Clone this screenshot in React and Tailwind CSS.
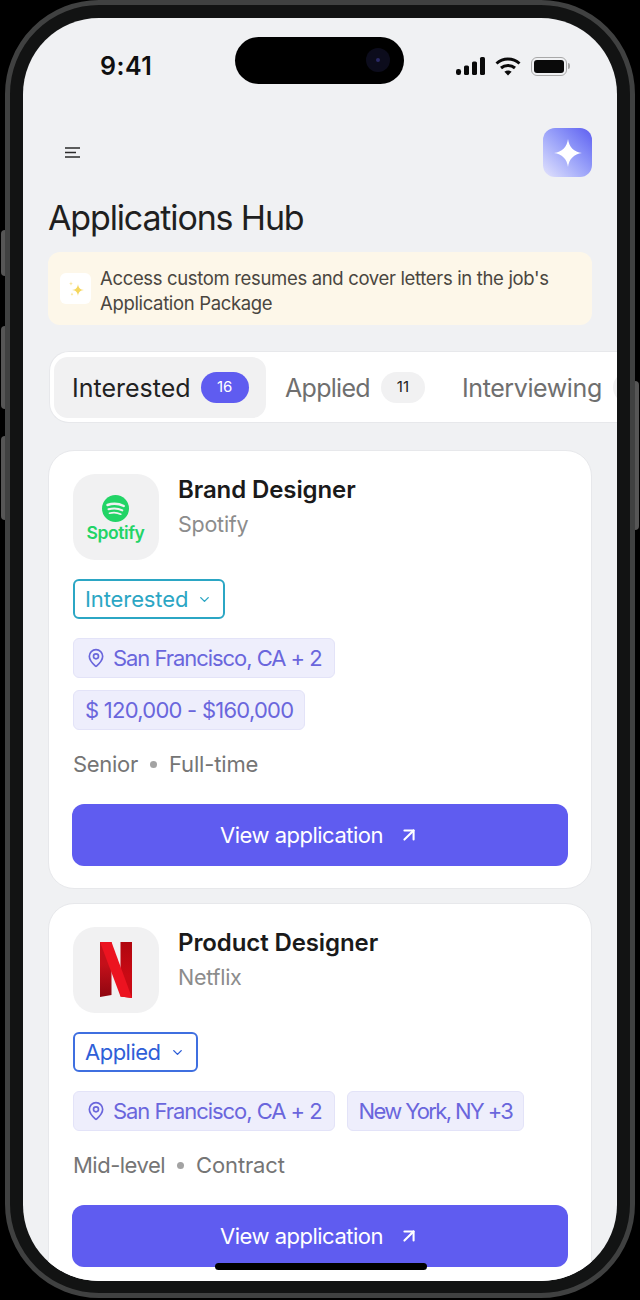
import { ArrowUpRight, ChevronDown, MapPin } from "lucide-react";

const font = { fontFamily: '"Inter", "Noto Sans", sans-serif' };

function StatusIcons() {
  return (
    <div className="flex items-center gap-[10px]">
      {/* signal */}
      <svg width="29" height="19" viewBox="0 0 29 19" fill="#0a0a0a">
        <rect x="0" y="12" width="5" height="6" rx="2.2" />
        <rect x="8" y="8.5" width="5" height="9.5" rx="1.6" />
        <rect x="16" y="4.5" width="5" height="13.5" rx="1.6" />
        <rect x="24" y="0" width="5" height="18" rx="1.6" />
      </svg>
      {/* wifi */}
      <svg width="26" height="19" viewBox="0 0 26 19" fill="none" stroke="#0a0a0a" strokeWidth="3">
        <path d="M1.5 6.5C8 0.6 18 0.6 24.5 6.5" />
        <path d="M6 11C10 7.6 16 7.6 20 11" />
        <path d="M13 18.6L9.4 14.8C11.4 13.2 14.6 13.2 16.6 14.8Z" fill="#0a0a0a" stroke="none" />
      </svg>
      {/* battery */}
      <div className="flex items-center gap-[1px]">
        <div className="w-[36px] h-[19px] rounded-[6px] border-[1.5px] border-[#a8a8a8] p-[2px]">
          <div className="w-full h-full rounded-[3px] bg-[#0a0a0a]" />
        </div>
        <div className="w-[2px] h-[6px] rounded-r-sm bg-[#a8a8a8]" />
      </div>
    </div>
  );
}

function SpotifyLogo() {
  return (
    <div className="mt-[2px] -ml-[1px] flex flex-col items-center gap-[1px]">
      <svg width="27" height="27" viewBox="0 0 27 27" fill="none">
        <circle cx="13.5" cy="13.5" r="13.5" fill="#22d466" />
        <path d="M5.5 10C10.5 8.2 17 8.6 21.8 11" stroke="#f1f1f2" strokeWidth="2.4" strokeLinecap="round" />
        <path d="M6.5 14.3C11 13 16.5 13.4 20.3 15.4" stroke="#f1f1f2" strokeWidth="2" strokeLinecap="round" />
        <path d="M7.5 18.2C11.2 17.2 15.6 17.6 18.8 19.2" stroke="#f1f1f2" strokeWidth="1.7" strokeLinecap="round" />
      </svg>
      <span className="text-[17.5px] leading-[19px] font-semibold tracking-[-0.4px] text-[#22d466]">Spotify</span>
    </div>
  );
}

function NetflixLogo() {
  return (
    <svg width="32" height="56" viewBox="0 0 32 56">
      <defs>
        <linearGradient id="nfLeft" x1="0" y1="0" x2="0" y2="1">
          <stop offset="0.4" stopColor="#c4101a" />
          <stop offset="1" stopColor="#8f0610" />
        </linearGradient>
        <linearGradient id="nfRight" x1="0" y1="0" x2="0" y2="1">
          <stop offset="0" stopColor="#b0060f" />
          <stop offset="0.6" stopColor="#c90a14" />
        </linearGradient>
      </defs>
      <path d="M0 0H11.5V53L0 55Z" fill="url(#nfLeft)" />
      <path d="M20.5 0H32V56L20.5 54.500Z" fill="url(#nfRight)" />
      <path d="M0 0H11.5L32 56L20.5 54.500Z" fill="#ec1320" />
    </svg>
  );
}

function Tag({ children, icon, tracking }) {
  return (
    <div className={`flex items-center gap-[7px] h-[40px] rounded-[6px] bg-[#eeeefc] border border-[#e3e3f8] text-[22px] text-[#6a66dc] ${icon ? "pl-[12px] pr-[12px]" : "px-[11px]"} ${tracking}`}>
      {icon && <MapPin size={20} strokeWidth={2} className="text-[#6a66dc]" />}
      <span>{children}</span>
    </div>
  );
}

function JobCard({ title, company, logo, status, statusClass, tagRows, level, levelClass, type }) {
  return (
    <div className="bg-white border border-[#e7e8eb] rounded-[26px] pl-[24px] pr-[23px] pt-[23px] pb-[22px] flex flex-col">
      <div className="flex gap-[19px]">
        <div className="w-[86px] h-[86px] rounded-[22px] bg-[#f1f1f2] flex items-center justify-center">
          {logo}
        </div>
        <div>
          <div className="text-[24px] leading-[32px] font-semibold tracking-[-0.1px] text-[#1a1a1a]">{title}</div>
          <div className="mt-[2px] text-[21.5px] leading-[32px] tracking-[-0.25px] text-[#8c8c8c]">{company}</div>
        </div>
      </div>

      <div className={`mt-[19px] self-start flex items-center gap-[9px] h-[40px] pl-[10px] pr-[11px] rounded-[6px] border-2 bg-white text-[22px] ${statusClass}`}>
        {status}
        <ChevronDown size={15} strokeWidth={2.25} />
      </div>

      <div className="mt-[19px] flex flex-col gap-[12px]">
        {tagRows.map((row, i) => (
          <div key={i} className="flex gap-[12px]">
            {row.map((t) => (
              <Tag key={t.label} icon={t.icon} tracking={t.tracking}>{t.label}</Tag>
            ))}
          </div>
        ))}
      </div>

      <div className="mt-[20px] flex items-center gap-[12px] h-[28px] text-[22px] text-[#757575]">
        <span className={levelClass}>{level}</span>
        <span className="w-[7px] h-[7px] rounded-full bg-[#a3a3a3]" />
        <span className="tracking-[-0.15px]">{type}</span>
      </div>

      <button className="mt-[26px] -ml-px h-[62px] rounded-[12px] bg-[#5f5cf0] text-white text-[22px] tracking-[-0.5px] flex items-center justify-center gap-[15px]">
        View application
        <ArrowUpRight size={22} strokeWidth={2.25} />
      </button>
    </div>
  );
}

export default function App() {
  return (
    <div style={font} className="relative w-[640px] h-[1300px] bg-black px-[5px] overflow-hidden">
      {/* side buttons */}
      <div className="absolute left-[1px] top-[230px] w-[4px] h-[46px] rounded-l-sm bg-[#565656]" />
      <div className="absolute left-[1px] top-[326px] w-[4px] h-[83px] rounded-l-sm bg-[#565656]" />
      <div className="absolute left-[1px] top-[436px] w-[4px] h-[84px] rounded-l-sm bg-[#565656]" />
      <div className="absolute right-[1px] top-[381px] w-[4px] h-[149px] rounded-r-sm bg-[#565656]" />

      {/* phone body */}
      <div className="relative h-[1298px] rounded-[94px] border-[5px] border-[#404141] bg-[#121313] px-[13px] pt-[13px] pb-[12px]">
        <div className="relative h-full rounded-[76px] bg-[#f0f1f3] overflow-hidden">
          {/* status bar */}
          <div className="flex pt-[19px] pl-[77px]">
            <div className="w-[135px] h-[47px] pt-[12px] flex items-center text-[25px] font-semibold tracking-[0.5px] text-[#0f0f0f]">9:41</div>
            <div className="relative w-[169px] h-[47px] rounded-full bg-black">
              <div className="absolute left-[131px] top-[11px] w-[24px] h-[24px] rounded-full bg-[#0c0c1c]">
                <div className="absolute left-[10px] top-[10px] w-[4px] h-[4px] rounded-full bg-[#2b2a66]" />
              </div>
            </div>
            <div className="ml-[52px] h-[47px] flex items-center pt-[11px]">
              <StatusIcons />
            </div>
          </div>

          <div className="pl-[25px] pr-[25px]">
            {/* top actions */}
            <div className="mt-[44px] flex items-center justify-between">
              <svg className="ml-[17px]" width="16" height="11" viewBox="0 0 16 11" fill="none" stroke="#2a2a2a" strokeWidth="1.6">
                <path d="M0 1H15" />
                <path d="M0 5.5H11" />
                <path d="M0 10H15" />
              </svg>
              <div className="w-[49px] h-[49px] rounded-[12px] bg-gradient-to-bl from-[#5f5cf0] to-[#e4e3fb] flex items-center justify-center">
                <svg width="28" height="28" viewBox="0 0 28 28" fill="white">
                  <path d="M14 0C15 8 20 13 28 14C20 15 15 20 14 28C13 20 8 15 0 14C8 13 13 8 14 0Z" />
                </svg>
              </div>
            </div>

            {/* title */}
            <h1 className="mt-[19px] text-[34px] leading-[44px] tracking-[-1.15px] text-[#1f1f1f]">Applications Hub</h1>

            {/* info banner */}
            <div className="mt-[12px] h-[73px] rounded-[12px] bg-[#fdf7e9] flex items-center gap-[9px] pl-[12px]">
              <div className="w-[31px] h-[31px] rounded-[6px] bg-white flex items-center justify-center">
                <svg width="20" height="20" viewBox="0 0 20 20" fill="#f5d75e">
                  <path d="M12 5C12.500 9 14 10.500 18 11C14 11.500 12.500 13 12 17C11.500 13 10 11.500 6 11C10 10.500 11.500 9 12 5Z" />
                  <path d="M5 2C5.200 4 5.700 4.500 7 4.800C5.700 5 5.200 5.500 5 7C4.800 5.500 4.300 5 3 4.800C4.300 4.500 4.800 4 5 2Z" fill="#f8e49a" />
                  <path d="M6 13C6.100 14.500 6.500 15 7.500 15.200C6.500 15.400 6.100 16 6 17.500C5.900 16 5.500 15.400 4.500 15.200C5.500 15 5.900 14.500 6 13Z" fill="#f8e49a" />
                </svg>
              </div>
              <p className="pt-[4px] text-[18.500px] leading-[25px] tracking-[-0.34px] text-[#4a4640]">
                Access custom resumes and cover letters in the job's
                <br />
                Application Package
              </p>
            </div>

            {/* tabs */}
            <div className="mt-[26px] ml-px -mr-[25px] h-[72px] rounded-l-[20px] bg-white border border-[#e7e8eb] border-r-0 flex items-center pl-[4px] overflow-hidden">
              <div className="shrink-0 w-[212px] h-[61px] rounded-[14px] bg-[#f1f1f2] flex items-center gap-[10px] pl-[18px]">
                <span className="pt-[3px] text-[25px] tracking-[0px] text-[#222222]">Interested</span>
                <span className="w-[48px] h-[31px] rounded-full bg-[#5f5cf0] text-white text-[15px] flex items-center justify-center">16</span>
              </div>
              <div className="shrink-0 ml-[19px] flex items-center gap-[11px]">
                <span className="pt-[3px] text-[25px] tracking-[-0.7px] text-[#6f6f6f]">Applied</span>
                <span className="w-[44px] h-[31px] rounded-full bg-[#f1f1f2] text-[#222222] text-[15px] flex items-center justify-center">11</span>
              </div>
              <div className="shrink-0 ml-[37px] flex items-center gap-[11px]">
                <span className="pt-[3px] text-[25px] tracking-[-0.4px] text-[#6f6f6f]">Interviewing</span>
                <span className="w-[44px] h-[31px] rounded-full bg-[#f1f1f2]" />
              </div>
            </div>

            {/* cards */}
            <div className="mt-[27px] flex flex-col gap-[14px]">
              <JobCard
                title="Brand Designer"
                company="Spotify"
                logo={<SpotifyLogo />}
                status="Interested"
                statusClass="border-[#2ba6c4] text-[#2ba6c4] tracking-[-0.1px]"
                tagRows={[
                  [{ label: "San Francisco, CA + 2", icon: true, tracking: "tracking-[-1.05px]" }],
                  [{ label: "$ 120,000 - $160,000", tracking: "tracking-[-0.75px]" }],
                ]}
                level="Senior"
                levelClass="tracking-[-0.3px]"
                type="Full-time"
              />
              <JobCard
                title="Product Designer"
                company="Netflix"
                logo={<NetflixLogo />}
                status="Applied"
                statusClass="border-[#3f6fe0] text-[#2f5fd8] tracking-[-0.5px]"
                tagRows={[
                  [
                    { label: "San Francisco, CA + 2", icon: true, tracking: "tracking-[-1.05px]" },
                    { label: "New York, NY +3", tracking: "tracking-[-1.65px]" },
                  ],
                ]}
                level="Mid-level"
                levelClass="tracking-[-0.5px]"
                type="Contract"
              />
            </div>
          </div>

          {/* home indicator */}
          <div className="absolute left-[192px] bottom-[11px] w-[212px] h-[7px] rounded-full bg-black" />
        </div>
      </div>
    </div>
  );
}
